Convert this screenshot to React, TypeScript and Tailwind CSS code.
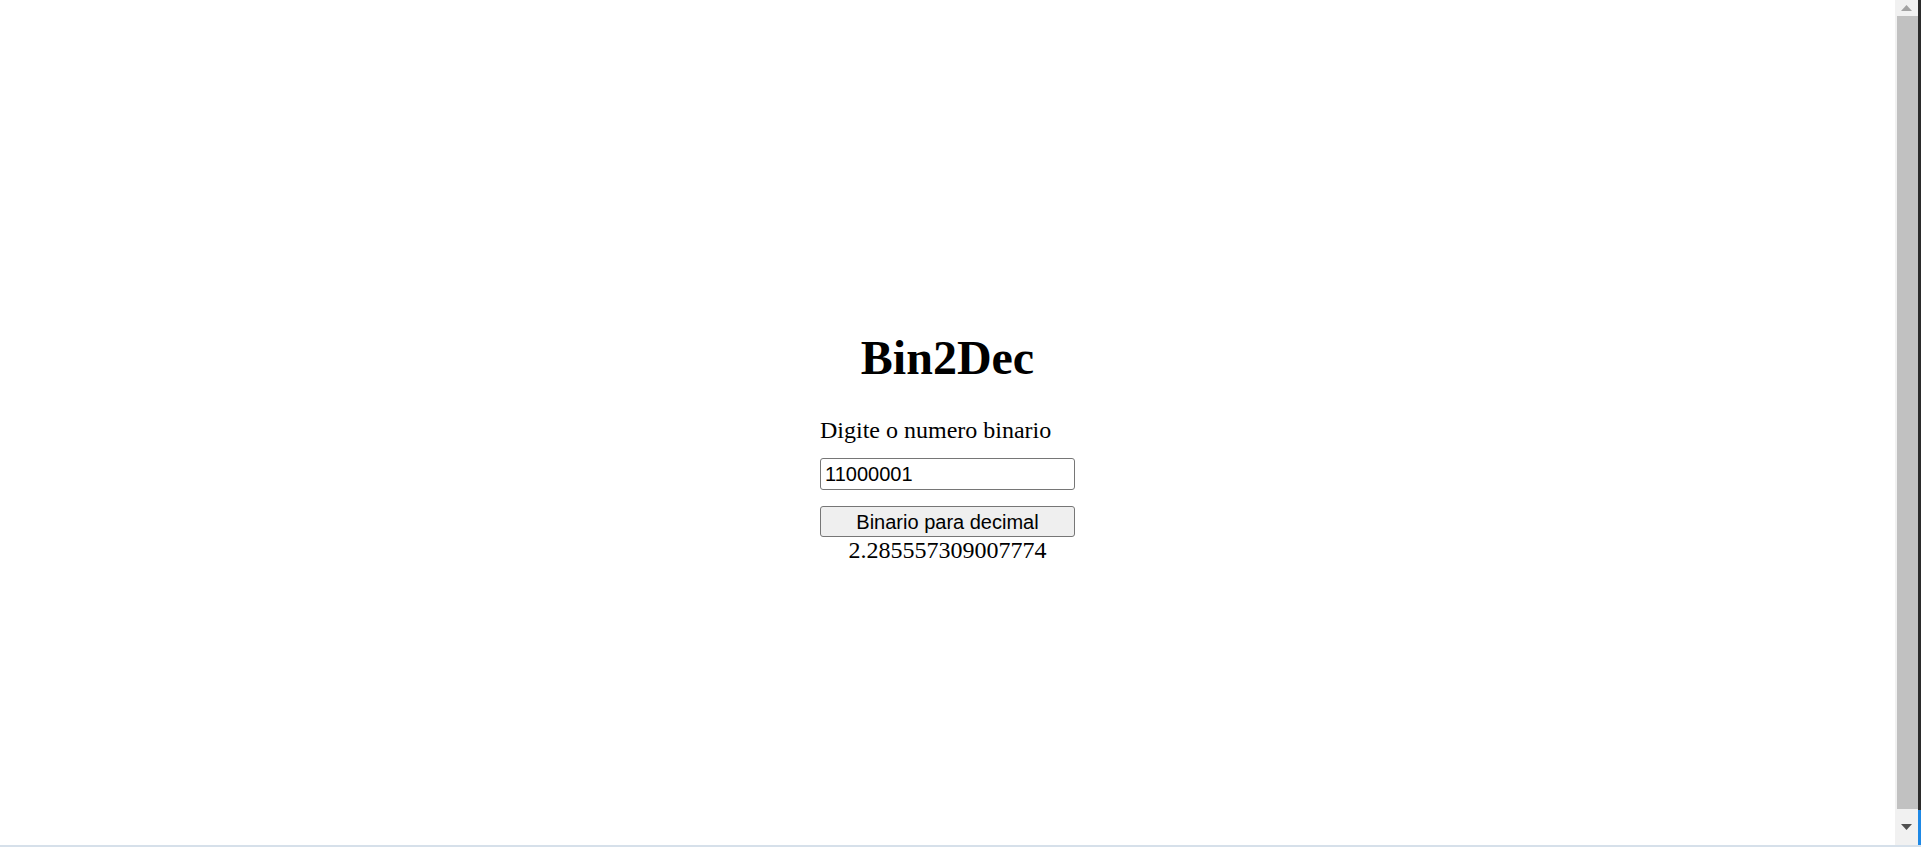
import React from "react";

export default function App() {
  return (
    <div className="w-[1921px] h-[847px] overflow-hidden bg-white flex flex-col">
      <div className="flex flex-1 min-h-0">
        <main className="flex-1 flex justify-center pt-[330px] font-['Liberation_Serif',serif] text-black">
          <div className="w-[255px] flex flex-col">
            <h1 className="text-center text-[48px] leading-[55px] font-bold m-0 mb-[31px]">Bin2Dec</h1>
            <label className="text-[24px] leading-[28px] mb-[14px]">Digite o numero binario</label>
            <input
              defaultValue="11000001"
              className="h-[32px] w-[255px] border border-[#767676] rounded-[3px] px-[4px] text-[20px] font-['Liberation_Sans',sans-serif] text-black bg-white mb-[16px] outline-none"
            />
            <button className="h-[31px] w-[255px] border border-[#767676] rounded-[3px] bg-[#efefef] text-[20px] leading-[24px] font-['Liberation_Sans',sans-serif] text-black">
              Binario para decimal
            </button>
            <p className="text-center text-[24px] leading-[27px] m-0">2.285557309007774</p>
          </div>
        </main>
        <div className="w-[26px] h-full flex">
          <div className="w-[23px] h-full bg-[#f1f1f1] flex flex-col items-center">
            <div className="h-[16px] w-full flex items-center justify-center">
              <svg width="11" height="6" viewBox="0 0 11 6"><polygon points="5.5,0 11,6 0,6" fill="#a3a3a3" /></svg>
            </div>
            <div className="w-[21px] flex-1 bg-[#c1c1c1] ml-[2px] self-start"></div>
            <div className="h-[36px] w-full flex items-center justify-center">
              <svg width="11" height="6" viewBox="0 0 11 6"><polygon points="0,0 11,0 5.5,6" fill="#505050" /></svg>
            </div>
          </div>
          <div className="w-[3px] h-full flex flex-col">
            <div className="flex-1 bg-[#2b2b2b]"></div>
            <div className="h-[35px] bg-[#1e88e5]"></div>
          </div>
        </div>
      </div>
      <div className="h-[2px] bg-[#d6e0ea]"></div>
    </div>
  );
}
